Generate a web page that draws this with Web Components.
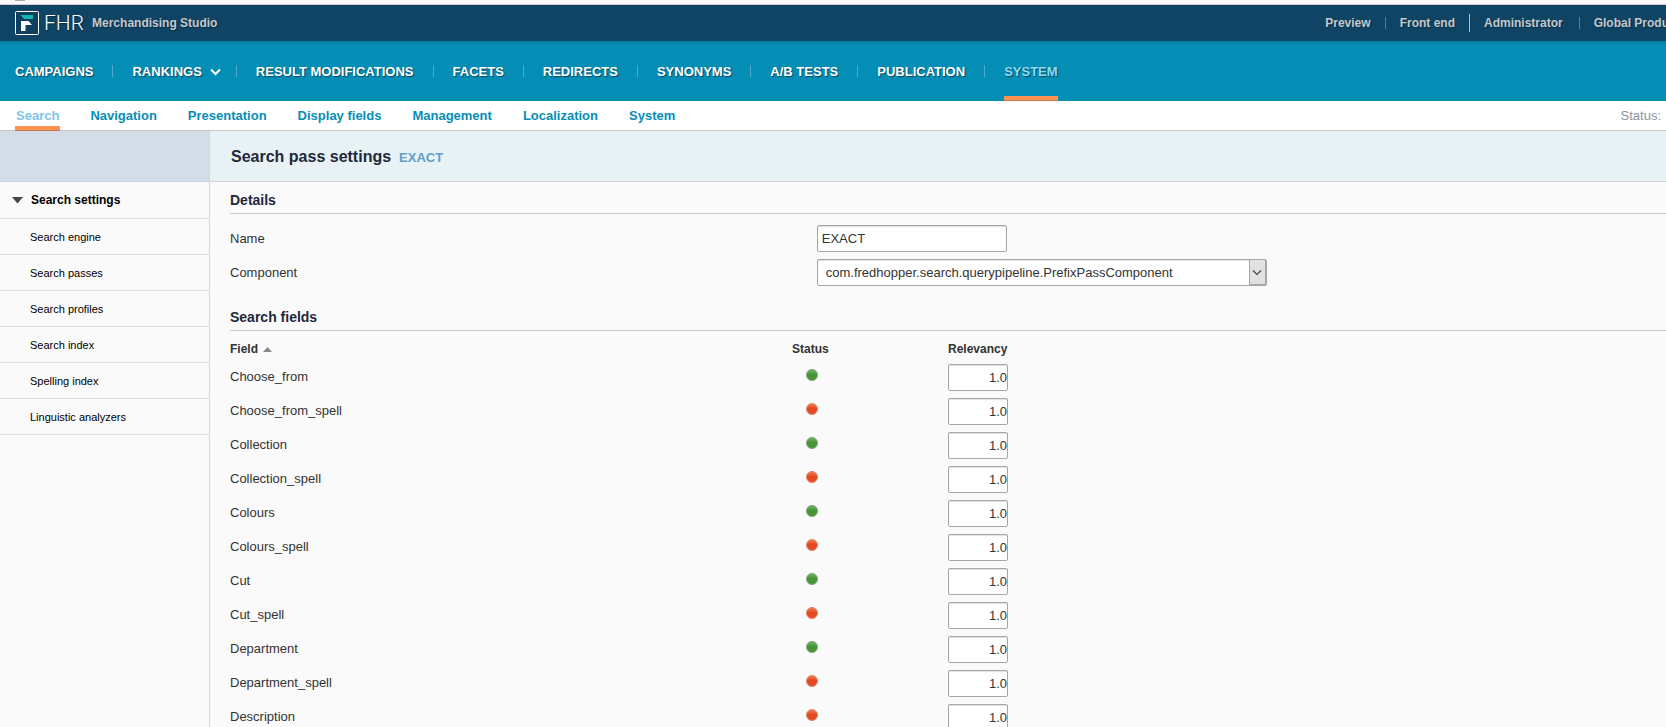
<!DOCTYPE html>
<html lang="en">
<head>
<meta charset="utf-8">
<title>Merchandising Studio</title>
<style>
  html, body { margin: 0; height: 100%; }
  body {
    font-family: "Liberation Sans", Arial, sans-serif;
    font-size: 13px;
    line-height: 16px;
    color: #333;
    background: #fafafa;
    overflow: hidden;
  }
</style>
</head>
<body>
<studio-app></studio-app>

<script>
const define = (name, html, setup) => {
  const template = document.createElement('template');
  template.innerHTML = html;
  customElements.define(name, class extends HTMLElement {
    constructor() {
      super();
      this.attachShadow({ mode: 'open' }).append(template.content.cloneNode(true));
    }
    connectedCallback() {
      if (setup && !this.ready) { this.ready = true; setup(this, this.shadowRoot); }
    }
  });
};

/* Logo: framed F mark and the brand letters */
define('studio-logo', `
  <style>
    :host { display: flex; align-items: center; gap: 5px; }
    svg { display: block; }
    .name { font: 300 21px/24px Roboto, sans-serif; color: #fff; text-shadow: 1px 1px 1px #0a2f48; }
    .product { font-size: 12px; font-weight: bold; color: #c4c8cc; margin-left: 3px; text-shadow: 1px 1px 1px #0a2f48; }
  </style>
  <svg width="24" height="24" viewBox="0 0 24 24" aria-hidden="true">
    <rect x=".5" y=".5" width="23" height="23" rx="1" fill="#0e3f5e" stroke="#fff"/>
    <path d="M5.500 4H18v4H9z" fill="#12b5b0"/>
    <path d="M6 10h7.500l3.500 4h-6.500v6H6z" fill="#fff"/>
  </svg>
  <span class="name">FHR</span>
  <span class="product">Merchandising Studio</span>
`);

/* Link in the dark top bar */
define('top-link', `
  <style>
    :host { display: flex; align-items: center; flex: none; }
    :host::before { content: ""; width: 1px; height: 12px; background: #5d7f95; }
    :host([first])::before { background: none; }
    :host([accent])::before { height: 18px; background: #fdb913; }
    a { padding: 0 14px; font-size: 12px; font-weight: bold; color: #c4c8cc; text-decoration: none; white-space: nowrap; text-shadow: 1px 1px 1px #0a2f48; }
    :host([last]) a { padding-right: 0; }
    :host([wide]) a { padding-right: 16px; }
  </style>
  <a href="#"><slot></slot></a>
`);

define('top-bar', `
  <style>
    :host { display: flex; justify-content: space-between; align-items: center; height: 36px; padding-left: 15px; background: #0f4464; overflow: hidden; }
    nav { display: flex; align-items: center; margin-right: -3px; }
  </style>
  <studio-logo></studio-logo>
  <nav aria-label="Account">
    <top-link first>Preview</top-link>
    <top-link>Front end</top-link>
    <top-link accent wide>Administrator</top-link>
    <top-link last>Global Produ</top-link>
  </nav>
`);

/* Item of the main navigation; [menu] adds a chevron, [current] the marker */
define('nav-item', `
  <style>
    :host { display: flex; align-items: center; height: 60px; }
    :host(:not([first]))::before { content: ""; width: 1px; height: 12px; margin: 0 19px; background: #55a9cf; }
    a { position: relative; box-sizing: border-box; display: flex; align-items: center; gap: 8px; height: 60px; padding-top: 2px; color: #fff; font-size: 13px; font-weight: bold; text-decoration: none; white-space: nowrap; text-shadow: 1px 1px 1px #0b4a66; }
    svg { display: none; }
    :host([menu]) svg { display: block; margin-right: -4px; }
    :host([current]) a { color: #8fd9ee; }
    :host([current]) a::after { content: ""; position: absolute; left: 0; right: 0; bottom: 0; height: 4px; background: #ff9250; border-bottom: 1px solid #c27850; }
  </style>
  <a href="#"><slot></slot><svg width="11" height="8" viewBox="0 0 11 8" fill="none" stroke="#fff" stroke-width="2" aria-hidden="true"><path d="M1 1.500l4.500 4.500L10 1.500"/></svg></a>
`);

define('main-nav', `
  <style>
    :host { display: block; background: linear-gradient(#067ba1, #058eb5 4px); }
    nav { display: flex; padding-left: 15px; }
  </style>
  <nav aria-label="Main">
    <nav-item first>CAMPAIGNS</nav-item>
    <nav-item menu>RANKINGS</nav-item>
    <nav-item>RESULT MODIFICATIONS</nav-item>
    <nav-item>FACETS</nav-item>
    <nav-item>REDIRECTS</nav-item>
    <nav-item>SYNONYMS</nav-item>
    <nav-item>A/B TESTS</nav-item>
    <nav-item>PUBLICATION</nav-item>
    <nav-item current>SYSTEM</nav-item>
  </nav>
`);

define('tab-link', `
  <style>
    :host { display: block; }
    a { position: relative; display: block; height: 29px; padding: 0 1px; line-height: 29px; font-size: 13px; font-weight: bold; color: #058eb5; text-decoration: none; white-space: nowrap; }
    :host([current]) a { color: #80c4ec; }
    :host([current]) a::after { content: ""; position: absolute; left: 0; right: 0; bottom: -1px; height: 4px; background: #ff9250; border-bottom: 1px solid #c27850; }
  </style>
  <a href="#"><slot></slot></a>
`);

define('sub-nav', `
  <style>
    :host { display: flex; justify-content: space-between; padding: 0 5px 0 15px; background: #fff; border-bottom: 1px solid #c4c6c9; }
    nav { display: flex; gap: 29px; }
    .status { color: #8f929c; line-height: 29px; }
  </style>
  <nav aria-label="System sections">
    <tab-link current>Search</tab-link>
    <tab-link>Navigation</tab-link>
    <tab-link>Presentation</tab-link>
    <tab-link>Display fields</tab-link>
    <tab-link>Management</tab-link>
    <tab-link>Localization</tab-link>
    <tab-link>System</tab-link>
  </nav>
  <span class="status">Status:</span>
`);

define('side-link', `
  <style>
    :host { display: block; border-bottom: 1px solid #dfe0e2; }
    a { display: block; height: 35px; padding-left: 30px; line-height: 37px; font-size: 11px; color: #000; text-decoration: none; }
  </style>
  <a href="#"><slot></slot></a>
`);

define('side-bar', `
  <style>
    :host { display: block; border-right: 1px solid #d5d7d9; background: #fafafa; }
    .cap { height: 50px; background: #d2dde8; border-bottom: 1px solid #c5d5e1; }
    button { display: flex; align-items: center; gap: 8px; width: 100%; height: 37px; padding: 0 0 0 12px; border: 0; border-bottom: 1px solid #dfe0e2; background: none; font: bold 12px/16px "Liberation Sans", Arial, sans-serif; color: #000; }
  </style>
  <div class="cap"></div>
  <button type="button" aria-expanded="true"><svg width="11" height="7" viewBox="0 0 11 7" aria-hidden="true"><path d="M0 0h11L5.500 6.500z" fill="#3f4650"/></svg>Search settings</button>
  <nav aria-label="Search settings">
    <side-link>Search engine</side-link>
    <side-link>Search passes</side-link>
    <side-link>Search profiles</side-link>
    <side-link>Search index</side-link>
    <side-link>Spelling index</side-link>
    <side-link>Linguistic analyzers</side-link>
  </nav>
`);

define('page-title', `
  <style>
    :host { display: flex; align-items: baseline; gap: 8px; height: 50px; padding-left: 21px; line-height: 52px; background: #e8f1f4; border-bottom: 1px solid #cad7df; }
    h1 { margin: 0; font-size: 16px; color: #22283a; }
    span { font-size: 13px; font-weight: bold; color: #5da0c8; }
  </style>
  <h1><slot></slot></h1><span><slot name="item"></slot></span>
`);

define('panel-section', `
  <style>
    :host { display: block; margin-left: 20px; }
    h2 { margin: 0; height: 31px; line-height: 36px; font-size: 14px; color: #22283a; border-bottom: 1px solid #c8c9cb; }
  </style>
  <h2><slot name="heading"></slot></h2>
  <slot></slot>
`);

define('details-form', `
  <style>
    :host { display: block; padding: 11px 0 6px; }
    .row { display: grid; grid-template-columns: calc(41% - 2px) minmax(0, 1fr); align-items: center; height: 27px; margin-bottom: 7px; }
    input, select { box-sizing: border-box; height: 27px; margin: 0; border: 1px solid #a6a6a6; border-radius: 2px; background: #fff; font: 13px/16px "Liberation Sans", Arial, sans-serif; color: #333; box-shadow: inset 0 1px 1px #e0e0e0; }
    input { width: 190px; padding: 0 4px; }
    .pick { position: relative; width: 450px; max-width: 100%; }
    select { display: block; width: 100%; padding: 0 24px 0 8px; appearance: none; }
    .pick svg { position: absolute; top: 1px; right: 1px; pointer-events: none; }
  </style>
  <div class="row"><label for="name">Name</label><div><input id="name" type="text" value="EXACT"></div></div>
  <div class="row">
    <label for="component">Component</label>
    <div class="pick">
      <select id="component"><option>com.fredhopper.search.querypipeline.PrefixPassComponent</option></select>
      <svg width="17" height="25" viewBox="0 0 17 25" aria-hidden="true">
        <rect width="17" height="25" fill="#a9a9a9"/><rect x="1" width="15" height="24" fill="#e1e1e1"/>
        <path d="M4 10.500l4 4 4-4" fill="none" stroke="#444" stroke-width="1.200"/>
      </svg>
    </div>
  </div>
`);

define('status-dot', `
  <style>
    :host { display: block; width: 12px; height: 12px; box-sizing: border-box; border-radius: 50%; border: 1px solid #7da373; background: linear-gradient(#6fae5c, #48963a 45%); }
    :host([off]) { border-color: #d98a74; background: linear-gradient(#f07a50, #e4491f 45%); }
  </style>
`);

define('field-table', `
  <style>
    :host { display: block; padding-top: 7px; }
    table { width: 100%; table-layout: fixed; border-collapse: collapse; }
    .field { width: 39%; } .status { width: 11%; }
    th, td { padding: 0; text-align: left; font-weight: normal; }
    thead th { height: 22px; font-size: 12px; font-weight: bold; }
    thead button { display: flex; align-items: center; gap: 5px; padding: 0; border: 0; background: none; font: inherit; color: inherit; }
    tbody tr { height: 34px; }
    th:nth-child(2) { padding-left: 2px; }
    status-dot { margin: 0 0 4px 16px; }
    input { display: block; box-sizing: border-box; width: 60px; height: 27px; margin: 0; padding: 0 0 0 4px; border: 1px solid #a6a6a6; border-radius: 2px; background: #fff; font: 13px/16px "Liberation Sans", Arial, sans-serif; color: #333; text-align: right; box-shadow: inset 0 1px 1px #e0e0e0; }
  </style>
  <table>
    <colgroup><col class="field"><col class="status"><col></colgroup>
    <thead><tr>
      <th scope="col" aria-sort="ascending"><button type="button">Field<svg width="9" height="5" viewBox="0 0 9 5" aria-hidden="true"><path d="M0 5L4.500 0 9 5z" fill="#888"/></svg></button></th>
      <th scope="col">Status</th>
      <th scope="col">Relevancy</th>
    </tr></thead>
    <tbody></tbody>
  </table>
`, (host, root) => {
  const rows = [
    ['Choose_from', true], ['Choose_from_spell', false], ['Collection', true], ['Collection_spell', false],
    ['Colours', true], ['Colours_spell', false], ['Cut', true], ['Cut_spell', false],
    ['Department', true], ['Department_spell', false], ['Description', false]
  ];
  root.querySelector('tbody').innerHTML = rows.map(([name, on]) => `
    <tr>
      <th scope="row"><label for="rel-${name}">${name}</label></th>
      <td><status-dot role="img" aria-label="${on ? 'Enabled' : 'Disabled'}"${on ? '' : ' off'}></status-dot></td>
      <td><input id="rel-${name}" type="text" inputmode="decimal" value="1.0"></td>
    </tr>`).join('');
});

define('studio-app', `
  <style>
    :host { display: flex; flex-direction: column; height: 100vh; }
    .edge { flex: none; height: 4px; background: #f9f9f9; border-bottom: 1px solid #d2d2d2; }
    .edge::before { content: ""; display: block; width: 10px; height: 1px; margin-left: 15px; background: #aaa; }
    top-bar, main-nav, sub-nav { flex: none; }
    .body { flex: 1; min-height: 0; display: grid; grid-template-columns: 210px minmax(0, 1fr); }
    main { min-width: 0; overflow: auto; scrollbar-width: none; }
  </style>
  <div class="edge"></div>
  <top-bar></top-bar>
  <main-nav></main-nav>
  <sub-nav></sub-nav>
  <div class="body">
    <side-bar></side-bar>
    <main>
      <page-title>Search pass settings<span slot="item">EXACT</span></page-title>
      <panel-section><span slot="heading">Details</span><details-form></details-form></panel-section>
      <panel-section><span slot="heading">Search fields</span><field-table></field-table></panel-section>
    </main>
  </div>
`);
</script>
</body>
</html>
